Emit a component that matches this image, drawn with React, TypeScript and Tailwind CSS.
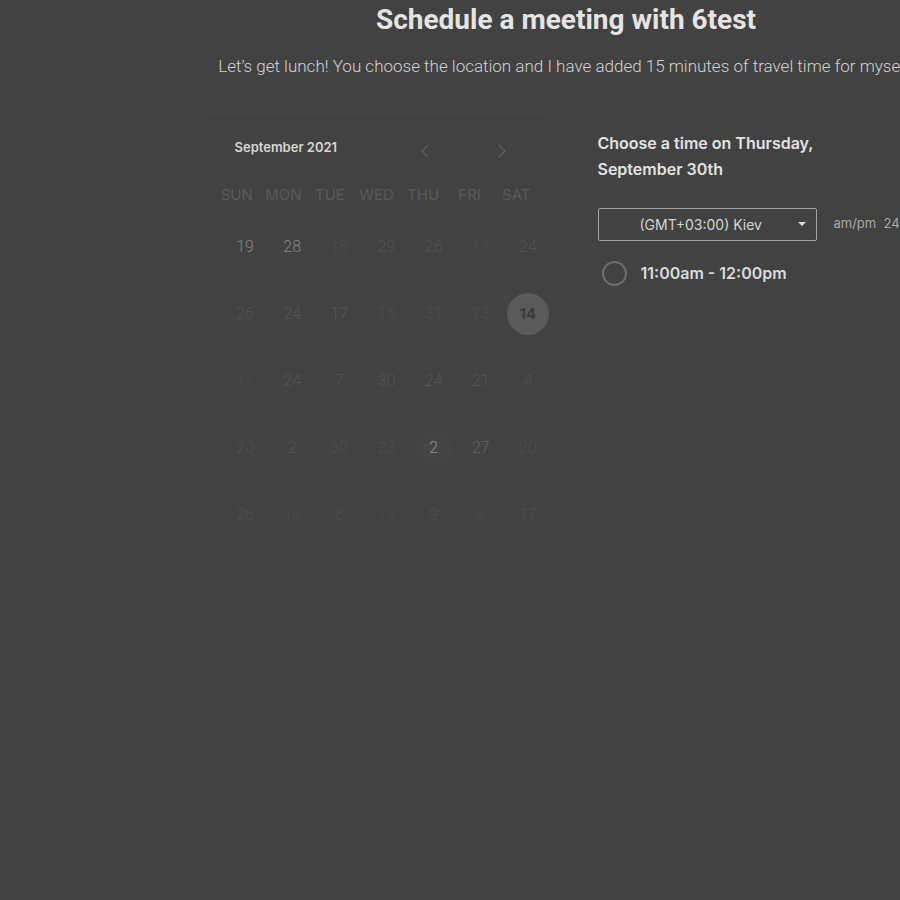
import React from "react";

const weekdays = ["SUN", "MON", "TUE", "WED", "THU", "FRI", "SAT"];

type Day = { n: number; c: string; sel?: boolean; ring?: boolean };

const rows: Day[][] = [
  [
    { n: 19, c: "text-[#858585]" },
    { n: 28, c: "text-[#858585]" },
    { n: 18, c: "text-[#4e4e4e]" },
    { n: 29, c: "text-[#525252]" },
    { n: 26, c: "text-[#525252]" },
    { n: 11, c: "text-[#4b4b4b]" },
    { n: 24, c: "text-[#525252]" },
  ],
  [
    { n: 26, c: "text-[#525252]" },
    { n: 24, c: "text-[#555555]" },
    { n: 17, c: "text-[#585858]" },
    { n: 15, c: "text-[#4e4e4e]" },
    { n: 31, c: "text-[#4e4e4e]" },
    { n: 23, c: "text-[#4e4e4e]" },
    { n: 14, c: "text-[#383838]", sel: true },
  ],
  [
    { n: 11, c: "text-[#4b4b4b]" },
    { n: 24, c: "text-[#555555]" },
    { n: 7, c: "text-[#525252]" },
    { n: 30, c: "text-[#525252]" },
    { n: 24, c: "text-[#555555]" },
    { n: 21, c: "text-[#555555]" },
    { n: 4, c: "text-[#525252]" },
  ],
  [
    { n: 20, c: "text-[#4e4e4e]" },
    { n: 2, c: "text-[#555555]" },
    { n: 30, c: "text-[#4e4e4e]" },
    { n: 23, c: "text-[#4e4e4e]" },
    { n: 2, c: "text-[#8e8e8e]", ring: true },
    { n: 27, c: "text-[#636363]" },
    { n: 20, c: "text-[#4e4e4e]" },
  ],
  [
    { n: 26, c: "text-[#4e4e4e]" },
    { n: 18, c: "text-[#4a4a4a]" },
    { n: 6, c: "text-[#4e4e4e]" },
    { n: 13, c: "text-[#4a4a4a]" },
    { n: 9, c: "text-[#4e4e4e]" },
    { n: 8, c: "text-[#4a4a4a]" },
    { n: 17, c: "text-[#4e4e4e]" },
  ],
];

function Calendar() {
  return (
    <div className="w-[342px] border-t border-[#494949] pt-[22px]">
      <div className="flex items-center pl-[29px] h-[24px]">
        <span className="font-['Inter'] font-semibold text-[13px] text-[#d6d6d6] w-[185px]">
          September 2021
        </span>
        <svg width="10" height="16" viewBox="0 0 10 16" className="mt-[6px]">
          <path d="M8 2 L2 8 L8 14" fill="none" stroke="#5e5e5e" strokeWidth="1.4" />
        </svg>
        <svg width="10" height="16" viewBox="0 0 10 16" className="mt-[6px] ml-[67px]">
          <path d="M2 2 L8 8 L2 14" fill="none" stroke="#5e5e5e" strokeWidth="1.4" />
        </svg>
      </div>
      <div className="grid grid-cols-7 w-[326px] ml-[8px] mt-[25px] font-['Inter'] text-[15px] text-[#5a5a5a] leading-[20px]">
        {weekdays.map((w) => (
          <div key={w} className="text-center">
            {w}
          </div>
        ))}
      </div>
      <div className="grid grid-cols-7 w-[330px] ml-[16px] mt-[9px] font-['Roboto'] font-light text-[16px]">
        {rows.flat().map((d, i) => (
          <div key={i} className="h-[67px] flex items-center justify-center">
            {d.sel ? (
              <div className="w-[42px] h-[42px] rounded-full bg-[#5a5a5a] flex items-center justify-center font-['Inter'] font-bold text-[15px] text-[#3a3a3a]">
                {d.n}
              </div>
            ) : (
              <div
                className={`w-[38px] h-[38px] rounded-full flex items-center justify-center ${d.c} ${
                  d.ring ? "bg-[#444444]" : ""
                }`}
              >
                {d.n}
              </div>
            )}
          </div>
        ))}
      </div>
    </div>
  );
}

function TimePanel() {
  return (
    <div className="w-[340px] ml-[34px] border-l border-b border-[#464646] pl-[15px] pt-[17px] pb-[12px]">
      <h2 className="font-['Inter'] font-semibold text-[16px] leading-[26px] text-[#e2e2e2]">
        Choose a time on Thursday,
        <br />
        September 30th
      </h2>
      <div className="flex items-center mt-[26px]">
        <div className="w-[219px] h-[33px] border border-[#a5a5a5] rounded-[2px] flex items-center pl-[41px] pr-[10px] font-['Inter'] text-[14px] text-[#d4d4d4]">
          <span className="flex-1">(GMT+03:00) Kiev</span>
          <svg width="8" height="5" viewBox="0 0 8 5">
            <path d="M0 0 L8 0 L4 4 Z" fill="#dcdcdc" />
          </svg>
        </div>
        <span className="ml-[17px] font-['Inter'] text-[13px] text-[#a8a8a8] whitespace-nowrap">
          am/pm&nbsp;&nbsp;24
        </span>
      </div>
      <div className="flex items-center mt-[20px] ml-[4px]">
        <div className="w-[25px] h-[25px] rounded-full border-2 border-[#6e6e6e]" />
        <span className="ml-[14px] font-['Inter'] font-semibold text-[16px] text-[#dadada]">
          11:00am - 12:00pm
        </span>
      </div>
    </div>
  );
}

export default function App() {
  return (
    <div className="w-[900px] h-[900px] overflow-hidden bg-[#424242]">
      <div className="w-[1132px] flex flex-col items-center">
        <h1 className="font-['Roboto'] font-bold text-[28px] leading-[32px] text-[#e4e4e4] mt-[4px]">
          Schedule a meeting with 6test
        </h1>
        <p className="font-['Roboto'] font-light text-[17px] text-[#d2d2d2] mt-[18px] whitespace-nowrap">
          Let’s get lunch! You choose the location and I have added 15 minutes of travel time for myself.
        </p>
        <div className="flex items-start mt-[33px] ml-[-5px]">
          <Calendar />
          <TimePanel />
        </div>
      </div>
    </div>
  );
}
